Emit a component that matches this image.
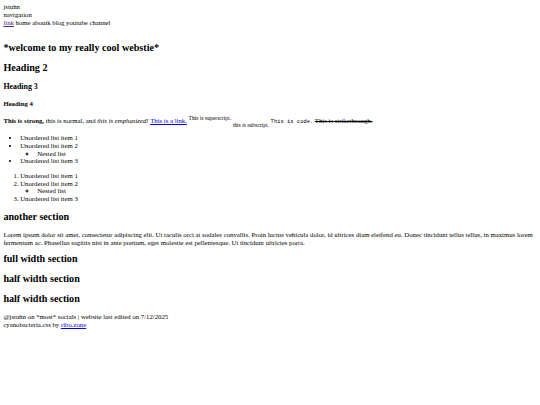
export default function App() {
  return (
    <div className="m-[3.375px] [font-family:'Liberation_Serif',serif] text-[6.75px] leading-[7.76px] text-black">
      <header>
        <div>jstuhn</div>
        <div>navigation</div>
        <nav>
          <a href="#" className="text-[#551a8b] underline">link</a> home aboutk blog youtube channel
        </nav>
      </header>

      <main className="mt-[15px]">
        <section>
          <h1 className="text-[10.125px] leading-[11.64px] font-bold mb-[8.4px]">*welcome to my really cool webstie*</h1>
          <h2 className="text-[10.125px] leading-[11.64px] font-bold my-[8.4px]">Heading 2</h2>
          <h3 className="text-[7.9px] leading-[9.08px] font-bold my-[7.9px]">Heading 3</h3>
          <h4 className="text-[6.75px] leading-[7.76px] font-bold my-[8.98px]">Heading 4</h4>
          <p className="my-[6.75px] pt-[0.5px] pb-[1.5px]">
            <strong className="font-bold">This is strong,</strong> this is normal, and{' '}
            <em className="italic">this is emphasized!</em>{' '}
            <a href="#" className="text-[#0000ee] underline">This is a link.</a>{' '}
            <sup className="relative -top-[3px] text-[5.6px] leading-[0]">This is superscript.</sup>{' '}
            <sub className="relative bottom-[-4px] text-[5.6px] leading-[0]">this is subscript.</sub>{' '}
            <code className="[font-family:'Liberation_Mono',monospace] text-[5.48px]">This is code.</code>{' '}
            <s className="line-through">This is strikethrough.</s>
          </p>
          <ul className="list-disc pl-[16.875px] my-[6.75px]">
            <li>Unordered list item 1</li>
            <li>
              Unordered list item 2
              <ul className="[list-style-type:circle] pl-[16.875px] marker:text-[8px] marker:leading-[7.76px]">
                <li>Nested list</li>
              </ul>
            </li>
            <li>Unordered list item 3</li>
          </ul>
          <ol className="list-decimal pl-[16.875px] my-[6.75px]">
            <li>Unordered list item 1</li>
            <li>
              Unordered list item 2
              <ul className="[list-style-type:circle] pl-[16.875px] marker:text-[8px] marker:leading-[7.76px]">
                <li>Nested list</li>
              </ul>
            </li>
            <li>Unordered list item 3</li>
          </ol>
        </section>

        <section>
          <h2 className="text-[10.125px] leading-[11.64px] font-bold my-[8.4px]">another section</h2>
          <p className="mt-[7.6px] mb-[6px]">
            Lorem ipsum dolor sit amet, consectetur adipiscing elit. Ut iaculis orci at sodales convallis. Proin luctus vehicula dolor, id ultrices diam eleifend eu. Donec tincidunt tellus tellus, in maximus lorem fermentum ac. Phasellus sagittis nisi in ante pretium, eget molestie est pellentesque. Ut tincidunt ultricies porta.
          </p>
        </section>

        <section>
          <h2 className="text-[10.125px] leading-[11.64px] font-bold mb-[8.4px]">full width section</h2>
        </section>
        <section>
          <h2 className="text-[10.125px] leading-[11.64px] font-bold my-[8.4px]">half width section</h2>
        </section>
        <section>
          <h2 className="text-[10.125px] leading-[11.64px] font-bold my-[8.4px]">half width section</h2>
        </section>
      </main>

      <footer className="mt-[8.4px]">
        <div>@jstuhn on *most* socials | website last edited on 7/12/2025</div>
        <div>
          cyanobacteria.css by <a href="#" className="text-[#0000ee] underline">ribo.zone</a>
        </div>
      </footer>
    </div>
  )
}
